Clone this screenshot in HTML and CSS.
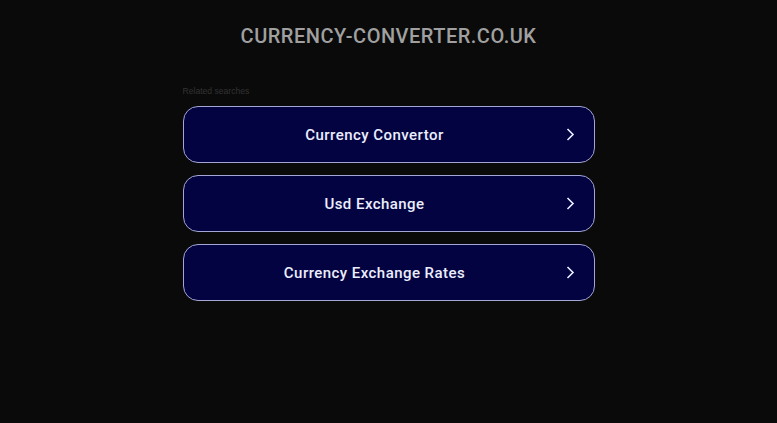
FILE: index.html
```html
<!DOCTYPE html>
<html lang="en">
<head>
    <meta charset="UTF-8">
    <meta name="viewport" content="width=device-width, initial-scale=1.0">
    <title>currency-converter.co.uk</title>
    <link rel="stylesheet" href="styles.css">
</head>
<body>
    <div class="page">
        <!-- Domain header -->
        <h1 class="domain">currency-converter.co.uk</h1>

        <!-- Related searches -->
        <div class="related">
            <p class="related-title">Related searches</p>
            <a class="search-link" href="#">
                <span class="search-text">Currency Convertor</span>
                <svg class="chevron" width="9" height="13" viewBox="0 0 9 13"><path d="M1.5 1 L7 6.5 L1.5 12" fill="none" stroke="currentColor" stroke-width="1.6"/></svg>
            </a>
            <a class="search-link" href="#">
                <span class="search-text">Usd Exchange</span>
                <svg class="chevron" width="9" height="13" viewBox="0 0 9 13"><path d="M1.5 1 L7 6.5 L1.5 12" fill="none" stroke="currentColor" stroke-width="1.6"/></svg>
            </a>
            <a class="search-link" href="#">
                <span class="search-text">Currency Exchange Rates</span>
                <svg class="chevron" width="9" height="13" viewBox="0 0 9 13"><path d="M1.5 1 L7 6.5 L1.5 12" fill="none" stroke="currentColor" stroke-width="1.6"/></svg>
            </a>
        </div>
    </div>
</body>
</html>
```

FILE: styles.css
```css
/* General Styles */
body {
    font-family: Roboto, "Liberation Sans", Arial, sans-serif;
    background-color: #0a0a0a;
    margin: 0;
    padding: 0;
}

.page {
    padding-top: 24px;
}

.domain {
    margin: 0;
    text-align: center;
    text-transform: uppercase;
    color: #a0a0a0;
    font-size: 20px;
    font-weight: 500;
    letter-spacing: 0.5px;
    line-height: 24px;
}

.related {
    width: 412px;
    margin: 38px auto 0;
}

.related-title {
    margin: 0 0 9px;
    font-family: "Liberation Sans", Arial, sans-serif;
    font-size: 8.6px;
    line-height: 11px;
    color: #333333;
}

.search-link {
    display: flex;
    align-items: center;
    box-sizing: border-box;
    height: 57px;
    margin-bottom: 12px;
    padding: 0 19px 0 0;
    background-color: #020340;
    border: 1px solid #a4a6d6;
    border-radius: 15px;
    color: #eceeff;
    font-size: 15px;
    font-weight: 500;
    letter-spacing: 0.45px;
    text-decoration: none;
}

.search-text {
    flex: 1;
    text-align: center;
}

.chevron {
    flex: none;
    color: #eceeff;
}
```
